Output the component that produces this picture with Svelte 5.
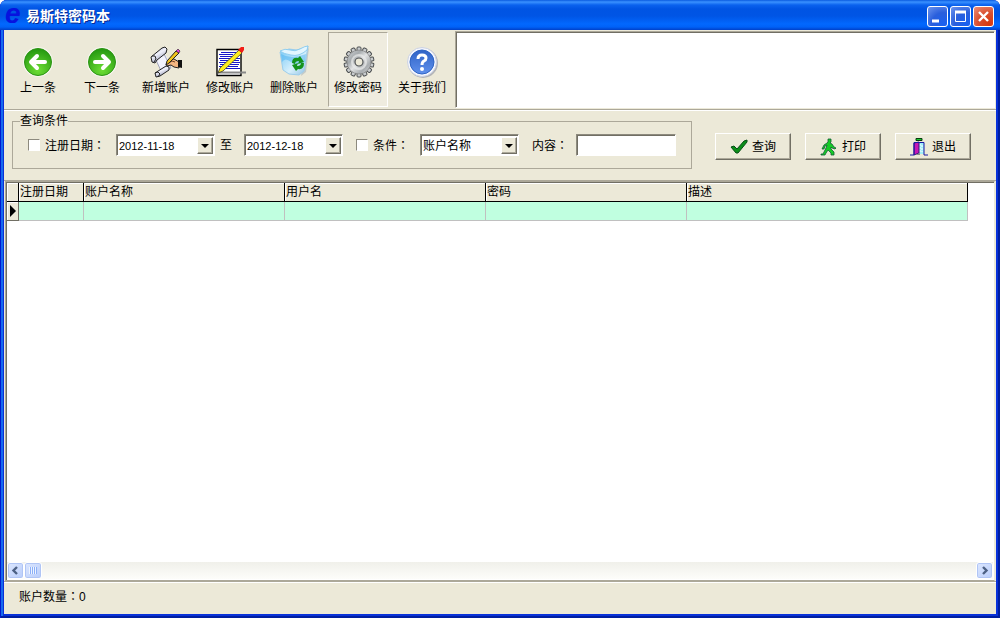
<script lang="ts">
	const tools = [
		{ icon: 'prev', label: '上一条' },
		{ icon: 'next', label: '下一条' },
		{ icon: 'add', label: '新增账户' },
		{ icon: 'edit', label: '修改账户' },
		{ icon: 'delete', label: '删除账户' },
		{ icon: 'gear', label: '修改密码' },
		{ icon: 'about', label: '关于我们' }
	];
	const columns = ['注册日期', '账户名称', '用户名', '密码', '描述'];
	const teeth = Array.from({ length: 14 }, (_, i) => (i * 360) / 14);

	let active = $state('gear');
	let useDate = $state(false);
	let useField = $state(false);
	let dateFrom = $state('2012-11-18');
	let dateTo = $state('2012-12-18');
	let field = $state('账户名称');
	let content = $state('');
	let count = $state(0);
</script>

{#snippet colon()}<span class="colon">：</span>{/snippet}

{#snippet toolIcon(name: string)}
	<svg class="tool-icon" viewBox="0 0 34 34" aria-hidden="true">
		{#if name === 'prev' || name === 'next'}
			<circle cx="17" cy="17" r="15" fill="#f7f6ee" />
			<circle cx="17" cy="17" r="13.5" fill="url(#green)" stroke="#2c9414" />
			<path
				d="M10 17 16 11M10 17 16 23M11 17H24"
				fill="none"
				stroke="#fff"
				stroke-width="4"
				stroke-linecap="round"
				transform={name === 'next' ? 'rotate(180 17 17)' : undefined}
			/>
		{:else if name === 'add'}
			<path d="M3 11 14 3 17 9 8 16 14 28 21 25 19 14 14 6 6 11Z" fill="#f2f3fd" />
			<path d="M7 15 15 9 22 23 13 28Z" fill="#f2f3fd" stroke="#8b90ae" stroke-width=".8" />
			<path d="M2 12 13 3 16 2 18 4 17 8 8 15 6 18 3 17Z" fill="url(#paper)" stroke="#222" />
			<path d="M3 11 6 11 7 14 5 17" fill="none" stroke="#222" />
			<path d="M6 28 17 21 20 22 20 25 11 31 7 32Z" fill="url(#paper)" stroke="#222" />
			<path d="M6 28 9 27 11 29 9 32" fill="none" stroke="#222" />
			<path d="M17 19 21 14 25 14 30 17V23L25 22 22 20 18 21Z" fill="#f3b681" stroke="#222" />
			<path d="M20 18 23 16 26 17" fill="none" stroke="#704020" />
			<path d="M29 15H33V23L29 22Z" fill="#111" />
			<path d="M17 20 18 16 27 6 30 8 20 18Z" fill="#f2c31c" stroke="#222" />
			<path d="M27 6 29 4 31 6 30 8Z" fill="#e83cdd" stroke="#222" stroke-width=".6" />
		{:else if name === 'edit'}
			<path d="M4 4.500H28V30.500H4Z" fill="#fff" stroke="#000" stroke-width="1.4" />
			<path
				d="M8 7.500H23M6 9.500H20M7 11.500H20M6 13.500H18M7 15.500H16M6 17.500H14M7 19.500H12M6 21.500H10M25 9.500H26M22 13.500H27M20 15.500H26M19 17.500H27M17 19.500H26M15 21.500H25M13 23.500H27"
				stroke="#1515c9"
				stroke-width="1.2"
			/>
			<path d="M5 27.500H33" stroke="#888" stroke-width="2" />
			<path d="M5 28 7 23 26 5 29 8 10 26Z" fill="#ffed1c" stroke="#333" stroke-width=".8" />
			<path d="M25 5 28 2H31V5L29 8Z" fill="#f21d16" />
		{:else if name === 'delete'}
			<path d="M28 6 32 3 29 27 24 31Z" fill="#a9b6c0" opacity=".6" />
			<path d="M3 7 12 4 20 5 31 1 27 26 22 30 12 29 6 25Z" fill="url(#bin)" stroke="#9ccdec" />
			<path d="M3 6Q8 3 13 5T23 4T31 1L30 5Q22 12 14 10Q7 9 3 6Z" fill="#e3f6ff" stroke="#7fc6ee" stroke-width=".8" />
			<path d="M4 9Q9 12 15 12T29 9L28 17Q20 22 14 17T5 17Z" fill="#49b1ef" opacity=".5" />
			<path d="M15 18Q15 12 21 13L23 11 27 17 21 19 22 16Q18 16 18 19Z" fill="#15931d" />
			<path d="M27 18Q27 25 21 24L19 26 15 20 21 18 20 21Q24 21 24 18Z" fill="#15931d" />
		{:else if name === 'gear'}
			{#each teeth as angle}
				<rect x="16" y="2" width="4" height="6" rx="1" fill="#c9ccce" stroke="#4c4f51" transform="rotate({angle} 18 17)" />
			{/each}
			<circle cx="18" cy="17" r="12" fill="url(#metal)" stroke="#777" stroke-width=".6" />
			<circle cx="18" cy="17" r="7" fill="none" stroke="#e8eaea" stroke-width="2" opacity=".7" />
			<circle cx="18" cy="17" r="4" fill="#ece9d8" stroke="#4c4f51" stroke-width="1.2" />
		{:else}
			<circle cx="18" cy="18" r="15" fill="#9a9daa" opacity=".7" />
			<circle cx="17" cy="17" r="14.5" fill="#f4f6fd" stroke="#ccd2e2" />
			<circle cx="17" cy="17" r="12" fill="url(#blue)" stroke="#2f64c4" />
			<path d="M13 14Q13 10 17 10T21 13Q21 15 19 16 17 17 17 20" fill="none" stroke="#fff" stroke-width="3" />
			<circle cx="17" cy="24" r="2" fill="#fff" />
		{/if}
	</svg>
{/snippet}

<svg class="defs" aria-hidden="true">
	<defs>
		<radialGradient id="green" cx=".5" cy=".8" r=".8">
			<stop offset="0" stop-color="#6dde35" />
			<stop offset="1" stop-color="#23970f" />
		</radialGradient>
		<linearGradient id="paper" x2=".6" y2="1">
			<stop offset="0" stop-color="#9a9fbe" />
			<stop offset=".5" stop-color="#f0f1fb" />
			<stop offset="1" stop-color="#8f94b2" />
		</linearGradient>
		<linearGradient id="bin" x2="1" y2="1">
			<stop offset="0" stop-color="#6cc4f5" />
			<stop offset=".6" stop-color="#d7f0fc" />
			<stop offset="1" stop-color="#88bde2" />
		</linearGradient>
		<linearGradient id="metal" x2="1" y2="1">
			<stop offset="0" stop-color="#d3d6d8" />
			<stop offset=".3" stop-color="#a5aaad" />
			<stop offset=".5" stop-color="#e2e3e4" />
			<stop offset=".75" stop-color="#a9adb0" />
			<stop offset="1" stop-color="#d8dadb" />
		</linearGradient>
		<linearGradient id="blue" x2="0" y2="1">
			<stop offset="0" stop-color="#2f63c6" />
			<stop offset="1" stop-color="#5f90ec" />
		</linearGradient>
	</defs>
</svg>

<div class="window">
	<header class="titlebar">
		<span class="logo" aria-hidden="true">e</span>
		<h1>易斯特密码本</h1>
		<div class="window-buttons">
			<button aria-label="最小化"><svg viewBox="0 0 19 19"><path d="M4 14H11" stroke-width="3" /></svg></button>
			<button aria-label="最大化"><svg viewBox="0 0 19 19"><path d="M4 5H15" stroke-width="3" /><path d="M4.500 5V14.500H14.500V5" /></svg></button>
			<button class="close" aria-label="关闭"><svg viewBox="0 0 19 19"><path d="M5 5 14 14M14 5 5 14" stroke-width="2.400" /></svg></button>
		</div>
	</header>

	<main>
		<div class="toolbar">
			<nav>
				{#each tools as tool}
					<button class="tool" class:active={active === tool.icon} onclick={() => (active = tool.icon)}>
						{@render toolIcon(tool.icon)}
						<span>{tool.label}</span>
					</button>
				{/each}
			</nav>
			<div class="banner"></div>
		</div>

		<form class="filter" onsubmit={(e) => e.preventDefault()}>
			<fieldset>
				<legend>查询条件</legend>
				<div class="fields">
					<label class="check date-check"><input type="checkbox" bind:checked={useDate} /><span>注册日期{@render colon()}</span></label>
					<div class="combo">
						<input aria-label="开始日期" bind:value={dateFrom} />
						<button type="button" class="drop" aria-label="选择开始日期"></button>
					</div>
					<span class="to">至</span>
					<div class="combo">
						<input aria-label="结束日期" bind:value={dateTo} />
						<button type="button" class="drop" aria-label="选择结束日期"></button>
					</div>
					<label class="check field-check"><input type="checkbox" bind:checked={useField} /><span>条件{@render colon()}</span></label>
					<div class="combo">
						<select aria-label="条件" bind:value={field}>
							{#each columns.slice(1) as name}
								<option>{name}</option>
							{/each}
						</select>
						<span class="drop"></span>
					</div>
					<label class="content-label" for="content">内容{@render colon()}</label>
					<input id="content" class="content" bind:value={content} />
				</div>
			</fieldset>
			<div class="actions">
				<button>
					<svg viewBox="0 0 18 18" aria-hidden="true">
						<path d="M1 9 4 8 7 11 14 3 17 2 17 4 8 15H6Z" fill="#0b8e18" stroke="#064f17" />
					</svg>
					查询
				</button>
				<button type="button">
					<svg viewBox="0 0 18 18" aria-hidden="true">
						<path d="M8 1H11V4L10 5 12 6 14 9 16 10 15 11 12 10 11 9V11L14 14V17H11V15L8 12 6 15 5 17H1V16H3L6 10 7 7 5 8 4 11H2L4 7 7 5 8 4Z" fill="#16cb27" stroke="#125c35" stroke-width=".8" />
					</svg>
					打印
				</button>
				<button type="button">
					<svg viewBox="0 0 18 18" aria-hidden="true">
						<path d="M6 .5H12V2.500H6Z" fill="#18c62b" stroke="#063b0c" />
						<path d="M9 5H14V16H9Z" fill="#9feef7" />
						<path d="M10 6V15M12 7V14" stroke="#fff" stroke-dasharray="2 1" />
						<path d="M4 5 9 4V15L4 17Z" fill="#c716b5" stroke="#30117c" />
						<path d="M0 17H4V4.500H14V17H18" fill="none" stroke="#1717a4" />
						<path d="M5 17 10 15V17Z" fill="#888" />
					</svg>
					退出
				</button>
			</div>
		</form>

		<section class="grid">
			<div class="grid-body">
				<table>
					<colgroup>
						<col class="w-mark" />
						<col class="w-date" />
						<col class="w-text" />
						<col class="w-text" />
						<col class="w-text" />
						<col class="w-desc" />
					</colgroup>
					<thead>
						<tr>
							<th aria-label="当前行"></th>
							{#each columns as name}
								<th>{name}</th>
							{/each}
						</tr>
					</thead>
					<tbody>
						<tr>
							<td class="mark"><svg viewBox="0 0 6 12" aria-hidden="true"><path d="M0 0 6 6 0 12Z" /></svg></td>
							{#each columns as name}
								<td></td>
							{/each}
						</tr>
					</tbody>
				</table>
			</div>
			<div class="scrollbar">
				<button aria-label="向左滚动"><svg viewBox="0 0 15 15"><path d="M9 4 5.500 7.500 9 11" /></svg></button>
				<div class="track"><div class="thumb"></div></div>
				<button aria-label="向右滚动"><svg viewBox="0 0 15 15"><path d="M6 4 9.500 7.500 6 11" /></svg></button>
			</div>
		</section>

		<footer>账户数量{@render colon()}{count}</footer>
	</main>
</div>

<style>
	:global(body) {
		background: #fff;
	}

	* {
		box-sizing: border-box;
	}

	.defs {
		position: absolute;
		width: 0;
		height: 0;
	}

	.window {
		display: flex;
		flex-direction: column;
		min-height: 100vh;
		padding: 0 4px 4px;
		border-radius: 7px 7px 0 0;
		background: #0831d9;
		box-shadow: inset 1px 0 #0019cf, inset -2px -2px #001ea0, inset 3px 0 #166aee;
		color: #000;
		font: 12px/16px "Liberation Sans", "Noto Sans CJK SC", sans-serif;
	}

	button,
	input,
	select {
		margin: 0;
		font: inherit;
		color: inherit;
	}

	.titlebar {
		display: flex;
		align-items: center;
		height: 30px;
		margin: 0 -4px;
		padding: 2px 6px 0 5px;
		border-radius: 7px 7px 0 0;
		background: linear-gradient(#0a5be0 0, #3a91ff 2px, #0a62ee 5px, #0054e3 9px, #0055e5 16px, #0268fe 24px, #0061f7 27px, #0040c8 30px);
	}

	.logo {
		width: 21px;
		color: #0712df;
		font: italic bold 28px/28px "Liberation Sans", sans-serif;
		padding-bottom: 4px;
	}

	h1 {
		flex: 1;
		margin: 0;
		padding-bottom: 2px;
		color: #fff;
		font: bold 14px/20px "Noto Sans CJK SC", sans-serif;
		text-shadow: 1px 1px #0a2b91;
	}

	.window-buttons {
		display: flex;
		gap: 2px;
	}

	.window-buttons button {
		width: 21px;
		height: 21px;
		padding: 0;
		border: 1px solid #fff;
		border-radius: 3px;
		background: radial-gradient(circle at 80% 90%, #1a61f0, #2a5fdc 50%, #6d95ee);
	}

	.window-buttons .close {
		background: radial-gradient(circle at 80% 90%, #d8380c, #d95030 50%, #ee8f78);
	}

	.window-buttons svg {
		display: block;
		width: 19px;
		height: 19px;
		fill: none;
		stroke: #fff;
	}

	main {
		display: flex;
		flex: 1;
		flex-direction: column;
		background: #ece9d8;
	}

	.toolbar {
		display: flex;
		height: 80px;
		padding: 1px 1px 1px 4px;
		border-bottom: 1px solid #aca899;
	}

	nav {
		display: flex;
		gap: 4px;
		padding-top: 1px;
	}

	.tool {
		display: flex;
		flex-direction: column;
		align-items: center;
		gap: 1px;
		width: 60px;
		height: 75px;
		padding: 12px 0 0;
		border: 1px solid transparent;
		background: none;
		white-space: nowrap;
	}

	.tool.active {
		border-color: #aca899 #fff #fff #aca899;
		background: #efecdf;
	}

	.tool-icon {
		width: 34px;
		height: 34px;
	}

	.banner {
		flex: 1;
		margin-left: 3px;
		border: 1px solid #fff;
		border-color: #aca899 #fff #fff #aca899;
		box-shadow: inset 1px 1px #716f64;
		background: #fff;
	}

	.filter {
		display: flex;
		align-items: flex-start;
		height: 71px;
		padding: 2px 25px 0 8px;
		border-top: 1px solid #fff;
		border-bottom: 1px solid #aca899;
	}

	fieldset {
		width: 680px;
		height: 56px;
		margin: 0;
		padding: 0 15px;
		border: 1px solid #aca899;
	}

	legend {
		margin-left: -8px;
		padding: 0;
	}

	.fields {
		display: flex;
		align-items: center;
		height: 22px;
		margin-top: 5px;
		white-space: nowrap;
	}

	.check {
		display: flex;
		align-items: center;
		gap: 5px;
	}

	.date-check {
		width: 88px;
	}

	.field-check {
		width: 64px;
		margin-left: 13px;
	}

	.colon {
		font-family: "Noto Sans CJK TC", sans-serif;
	}

	.check input {
		appearance: none;
		width: 12px;
		height: 12px;
		border: 1px solid #fff;
		border-color: #8d8a7e #fff #fff #8d8a7e;
		background: #fff;
	}

	.check input:checked {
		background: #333;
	}

	.combo,
	.content {
		border: 1px solid #fff;
		border-color: #8d8a7e #fff #fff #8d8a7e;
		box-shadow: inset 1px 1px #716f64;
		background: #fff;
	}

	.combo {
		display: flex;
		width: 99px;
		height: 22px;
		padding: 2px 1px 1px 2px;
	}

	.combo input,
	.combo select {
		appearance: none;
		flex: 1;
		width: 0;
		padding: 0;
		border: 0;
		outline: 0;
		background: none;
	}

	.combo input {
		font-size: 11px;
	}

	.drop {
		display: grid;
		place-items: center;
		width: 16px;
		padding: 0;
		border: 1px solid #fff;
		border-color: #fff #716f64 #716f64 #fff;
		box-shadow: inset -1px -1px #aca899;
		background: #ece9d8;
	}

	.drop::before {
		content: "";
		border: 4px solid transparent;
		border-top-color: #000;
		border-bottom: 0;
	}

	span.drop {
		pointer-events: none;
	}

	.to {
		width: 29px;
		padding-left: 5px;
	}

	.content-label {
		width: 44px;
		margin: 0 0 0 13px;
	}

	.content {
		width: 100px;
		height: 22px;
		padding: 0 3px;
	}

	.actions {
		display: flex;
		gap: 14px;
		margin: 20px 0 0 auto;
	}

	.actions button {
		display: flex;
		align-items: center;
		justify-content: center;
		gap: 4px;
		width: 76px;
		height: 27px;
		padding: 0;
		border: 1px solid #fff;
		border-color: #fff #716f64 #716f64 #fff;
		box-shadow: inset -1px -1px #aca899;
		background: #ece9d8;
	}

	.actions svg {
		width: 18px;
		height: 18px;
	}

	.grid {
		display: flex;
		flex: 1;
		flex-direction: column;
		margin: 0 1px;
		padding: 1px;
		border: 1px solid #aca899;
		border-right-color: #ece9d8;
		box-shadow: inset 1px 1px #716f64;
		background: #fff;
	}

	.grid-body {
		flex: 1;
	}

	table {
		width: 961px;
		table-layout: fixed;
		border-collapse: separate;
		border-spacing: 0;
	}

	.w-mark {
		width: 12px;
	}

	.w-date {
		width: 65px;
	}

	.w-text {
		width: 201px;
	}

	.w-desc {
		width: 281px;
	}

	th {
		height: 19px;
		padding: 0 1px;
		border-right: 1px solid #000;
		border-bottom: 1px solid #000;
		box-shadow: inset 1px 1px #fff;
		background: #ece9d8;
		font-weight: normal;
		text-align: left;
	}

	td {
		height: 19px;
		padding: 0;
		border-right: 1px solid #c0c0c0;
		border-bottom: 1px solid #c0c0c0;
		background: #c0ffe0;
	}

	.mark {
		padding-left: 3px;
		border-color: #716f64;
		box-shadow: inset 1px 1px #fff;
		background: #ece9d8;
	}

	.mark svg {
		display: block;
		width: 6px;
		height: 12px;
	}

	.scrollbar {
		display: flex;
		height: 17px;
		background: linear-gradient(#f0f0ea, #fdfdfa);
	}

	.scrollbar button,
	.thumb {
		width: 17px;
		height: 17px;
		padding: 0;
		border: 1px solid #fff;
		border-radius: 3px;
		box-shadow: inset 0 0 0 1px #b0c5f5;
		background: linear-gradient(135deg, #dce7ff, #b9cdfa);
	}

	.scrollbar svg {
		display: block;
		width: 15px;
		height: 15px;
		fill: none;
		stroke: #4d6185;
		stroke-width: 2.400;
	}

	.track {
		flex: 1;
	}

	.thumb {
		display: grid;
		place-items: center;
		width: 18px;
	}

	.thumb::before {
		content: "";
		width: 8px;
		height: 7px;
		background: repeating-linear-gradient(90deg, #eef4ff 0 1px, #8cb0f8 1px 2px);
	}

	footer {
		height: 33px;
		padding: 6px 15px;
		border-top: 1px solid #aca899;
		box-shadow: inset 0 1px #fff;
	}
</style>
